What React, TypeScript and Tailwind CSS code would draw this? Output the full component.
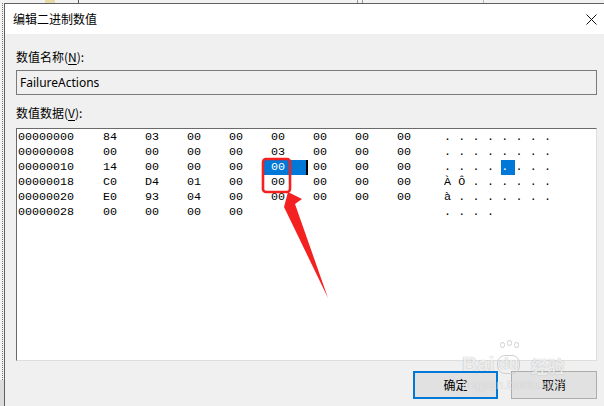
import React from "react";

const rows: { off: string; hex: string[]; ascii: string[] }[] = [
  { off: "00000000", hex: ["84", "03", "00", "00", "00", "00", "00", "00"], ascii: [".", ".", ".", ".", ".", ".", ".", "."] },
  { off: "00000008", hex: ["00", "00", "00", "00", "03", "00", "00", "00"], ascii: [".", ".", ".", ".", ".", ".", ".", "."] },
  { off: "00000010", hex: ["14", "00", "00", "00", "00", "00", "00", "00"], ascii: [".", ".", ".", ".", ".", ".", ".", "."] },
  { off: "00000018", hex: ["C0", "D4", "01", "00", "00", "00", "00", "00"], ascii: ["À", "Ô", ".", ".", ".", ".", ".", "."] },
  { off: "00000020", hex: ["E0", "93", "04", "00", "00", "00", "00", "00"], ascii: ["à", ".", ".", ".", ".", ".", ".", "."] },
  { off: "00000028", hex: ["00", "00", "00", "00"], ascii: [".", ".", ".", "."] },
];

const cjk = "font-['Noto_Sans_CJK_SC','Noto_Sans',sans-serif]";

function Underlined({ pre, ch }: { pre: string; ch: string }) {
  return (
    <span>
      {pre}(<span className="underline underline-offset-2">{ch}</span>):
    </span>
  );
}

export default function App() {
  return (
    <div className="relative w-[604px] h-[406px] overflow-hidden bg-[#ececec] flex flex-col">
      {/* background strip above dialog */}
      <div className="h-[3px] flex bg-[#f2f2f2] shrink-0">
        <div className="w-[45px]" />
        <div className="w-[10px] bg-[#e8d9a8]" />
        <div className="w-[23px]" />
        <div className="w-px bg-[#555]" />
        <div className="w-[278px]" />
        <div className="w-px bg-[#999]" />
        <div className="w-[4px]" />
        <div className="w-px bg-[#999]" />
        <div className="w-[120px]" />
        <div className="w-px bg-[#bbb]" />
      </div>
      <div className="flex flex-1 min-h-0">
        {/* left background strip */}
        <div className="w-[4px] flex flex-col shrink-0">
          <div className="h-[377px] bg-[#f4f4f4] flex justify-center">
            <div className="w-px h-full border-l border-dotted border-[#777]" />
          </div>
          <div className="flex-1 bg-[#dcdcdc]" />
        </div>
        {/* dialog */}
        <div className="flex-1 flex flex-col border-l border-t border-[#5f5f5f] bg-[#f0f0f0]">
          <div className={`h-[30px] bg-white flex items-center justify-between pl-[8px] pr-[6px] ${cjk}`}>
            <span className="text-[12px] text-black leading-none">编辑二进制数值</span>
            <svg width="11" height="11" viewBox="0 0 11 11" className="mr-[1px]">
              <path d="M0.5 0.5 L10.5 10.5 M10.5 0.5 L0.5 10.5" stroke="#111" strokeWidth="1" fill="none" />
            </svg>
          </div>
          <div className="flex flex-col pl-[11px] pr-[7px] pt-[15px]">
            <div className={`text-[12px] leading-[16px] text-black ${cjk}`}>
              <Underlined pre="数值名称" ch="N" />
            </div>
            <div className="mt-[5px] h-[25px] border border-[#7a7a7a] bg-[#f0f0f0] flex items-center pl-[3px]">
              <span className="text-[12px] text-black font-['Noto_Sans',sans-serif]">FailureActions</span>
            </div>
            <div className={`mt-[10px] text-[12px] leading-[16px] text-black ${cjk}`}>
              <Underlined pre="数值数据" ch="V" />
            </div>
            <div className="mt-[7px] h-[233px] border-l border-t border-[#6a6a6a] border-r border-b border-r-[#dedede] border-b-[#dedede] bg-white pt-[1px] pl-[1px]">
              <div className="font-['Liberation_Mono',monospace] text-[11.7px] text-black">
                {rows.map((r, ri) => (
                  <div key={r.off} className="flex h-[15px] items-center leading-[15px]">
                    <div className="w-[78px] shrink-0">{r.off}</div>
                    {Array.from({ length: 8 }).map((_, ci) => {
                      const v = r.hex[ci];
                      const sel = ri === 2 && ci === 4;
                      return (
                        <div key={ci} className={`relative w-[42px] shrink-0 h-[15px] pl-[7px] ${sel ? "bg-[#0078d7] text-white" : ""}`}>
                          {v ?? ""}
                          {sel && <span className="absolute right-[-2px] top-0 h-[15px] w-[2px] bg-black" />}
                        </div>
                      );
                    })}
                    <div className="w-[12px] shrink-0" />
                    {r.ascii.map((a, ai) => {
                      const sel = ri === 2 && ai === 4;
                      return (
                        <div key={ai} className={`w-[14.3px] shrink-0 h-[15px] ${sel ? "bg-[#0078d7] text-white" : ""}`}>
                          {a}
                        </div>
                      );
                    })}
                  </div>
                ))}
              </div>
            </div>
            <div className={`mt-[10px] flex justify-end gap-[13px] ${cjk}`}>
              <button className="w-[85px] h-[28px] border-2 border-[#0078d7] bg-[#e1e1e1] text-[12px] text-black flex items-center justify-center">
                确定
              </button>
              <button className="w-[86px] h-[28px] border border-[#adadad] bg-[#e1e1e1] text-[12px] text-black flex items-center justify-center">
                取消
              </button>
            </div>
          </div>
        </div>
      </div>

      {/* watermark */}
      <div className="pointer-events-none absolute left-[462px] top-[336px] flex flex-col items-start">
        <div className="flex items-end gap-[2px] h-[38px]">
          <span className="text-[21px] leading-none font-bold text-white/80 font-['Liberation_Sans',sans-serif] [text-shadow:0_0_1px_rgba(0,0,0,0.35)]">Bai</span>
          <span className="relative w-[24px] h-[34px] flex items-end justify-center">
            <span className="absolute top-[2px] left-[3px] w-[5px] h-[6px] rounded-full border border-[#cfcfcf]" />
            <span className="absolute top-0 left-[10px] w-[5px] h-[6px] rounded-full border border-[#cfcfcf]" />
            <span className="absolute top-[2px] left-[17px] w-[5px] h-[6px] rounded-full border border-[#cfcfcf]" />
            <span className="text-[16px] leading-none font-bold text-white/80 font-['Liberation_Sans',sans-serif] [text-shadow:0_0_1px_rgba(0,0,0,0.35)] rounded-[8px] border border-[#cfcfcf] px-[1px] pb-[1px]">du</span>
          </span>
          <span className={`ml-[8px] text-[17px] leading-none font-bold text-white/80 ${cjk} [text-shadow:0_0_1px_rgba(0,0,0,0.35)]`}>经验</span>
        </div>
        <span className="mt-[4px] text-[13px] leading-none text-white/60 font-['Liberation_Sans',sans-serif] [text-shadow:0_0_1px_rgba(0,0,0,0.2)]">jingyan.baidu.com</span>
      </div>

      {/* red annotation */}
      <svg className="pointer-events-none absolute left-0 top-0" width="604" height="406">
        <rect x="263" y="159" width="27" height="33" rx="3" ry="3" fill="none" stroke="#f42121" strokeWidth="2.6" />
        <polygon points="288,192 302,199 295,204 328,298 284,207" fill="#f42121" />
      </svg>
    </div>
  );
}
